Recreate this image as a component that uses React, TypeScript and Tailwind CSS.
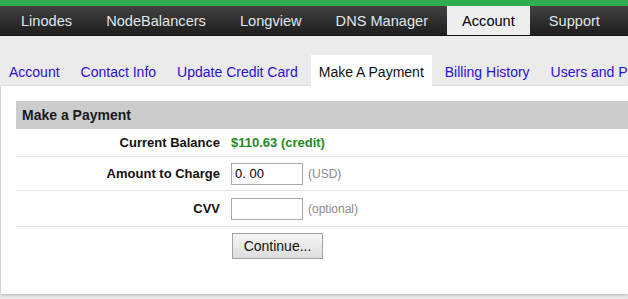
const topTabs = ["Linodes", "NodeBalancers", "Longview", "DNS Manager", "Account", "Support"];
const subTabs = ["Account", "Contact Info", "Update Credit Card", "Make A Payment", "Billing History", "Users and Permissions"];

function TopNav() {
  return (
    <div className="border-t-[6px] border-[#2fae4f]">
      <div className="flex gap-[4px] h-[30px] pl-[6px] bg-gradient-to-b from-[#444240] to-[#1e1e1e] border-b border-[#141414] overflow-hidden">
        {topTabs.map((t) => (
          <div
            key={t}
            className={`px-[15px] pt-[3px] flex items-center text-[14.6px] whitespace-nowrap ${
              t === "Account" ? "bg-[#eeeeee] text-black" : "text-[#dfe6ee]"
            }`}
          >
            {t}
          </div>
        ))}
      </div>
    </div>
  );
}

function SubTabs() {
  return (
    <div className="flex gap-[5px] pt-[19px] pl-px whitespace-nowrap overflow-hidden">
      {subTabs.map((t) => (
        <div
          key={t}
          className={`px-[8px] pt-[3px] h-[31px] flex items-center text-[14px] ${
            t === "Make A Payment" ? "bg-white text-[#111111]" : "text-[#2a0fd6]"
          }`}
        >
          {t}
        </div>
      ))}
    </div>
  );
}

function Label({ children }: { children: React.ReactNode }) {
  return <div className="w-[209px] pr-[5px] text-right text-[13px] font-bold text-[#111111]">{children}</div>;
}

export default function App() {
  return (
    <div className="w-[628px] h-[299px] bg-[#ebebeb] overflow-hidden" style={{ fontFamily: '"Liberation Sans", Arial, sans-serif' }}>
      <TopNav />
      <SubTabs />
      <div className="ml-px h-[208px] bg-white pl-[15px] pt-[15px] shadow-[0_1px_3px_rgba(0,0,0,0.25)]">
        <div className="h-[28px] bg-[#cccccc] pl-[6px] flex items-center text-[14px] font-bold text-[#1a1a1a]">
          Make a Payment
        </div>
        <div className="h-[28px] flex items-center border-b border-[#e6e6e6]">
          <Label>Current Balance</Label>
          <div className="pl-[6px] text-[13px] font-bold text-[#1f8c1f]">$110.63 (credit)</div>
        </div>
        <div className="h-[34px] flex items-center border-b border-[#e6e6e6]">
          <Label>Amount to Charge</Label>
          <div className="pl-[6px] flex items-center gap-[5px]">
            <input
              defaultValue="0. 00"
              className="w-[72px] h-[22px] border border-[#a9a9a9] px-[3px] text-[13px] text-black outline-none"
            />
            <span className="text-[12px] text-[#8a8a8a]">(USD)</span>
          </div>
        </div>
        <div className="h-[36px] flex items-center border-b border-[#e6e6e6]">
          <Label>CVV</Label>
          <div className="pl-[6px] flex items-center gap-[5px]">
            <input className="w-[72px] h-[22px] border border-[#a9a9a9] px-[3px] text-[13px] outline-none" />
            <span className="text-[12px] text-[#8a8a8a]">(optional)</span>
          </div>
        </div>
        <div className="pt-[6px] pl-[216px]">
          <button className="w-[91px] h-[26px] border border-[#a3a3a3] bg-gradient-to-b from-[#f6f6f6] to-[#dddddd] text-[14px] text-[#111111]">
            Continue...
          </button>
        </div>
      </div>
    </div>
  );
}
